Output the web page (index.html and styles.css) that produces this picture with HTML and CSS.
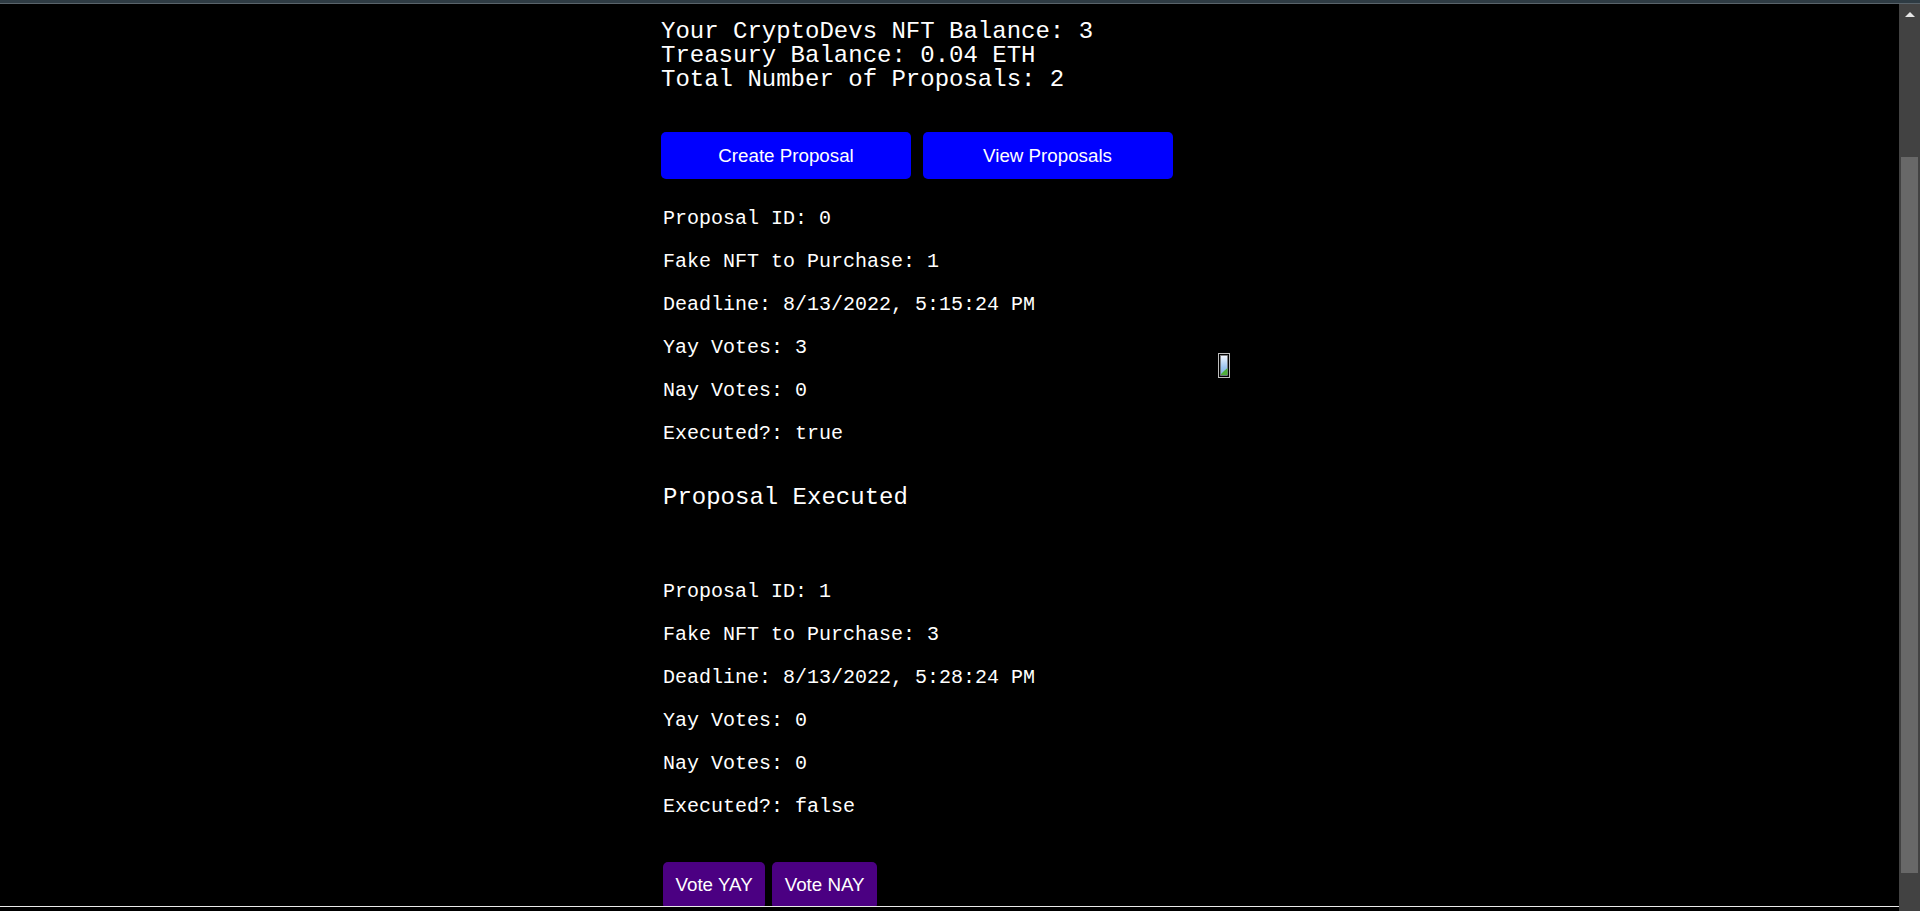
FILE: index.html
```html
<!DOCTYPE html>
<html>
<head>
<meta charset="utf-8">
<title>Crypto Devs DAO</title>
<link rel="stylesheet" href="styles.css">
</head>
<body>
<div class="topbar"></div>
<div class="window">
  <div class="page">
    <div class="main">
      <div class="content">
        <div class="description">Your CryptoDevs NFT Balance: 3<br>Treasury Balance: 0.04 ETH<br>Total Number of Proposals: 2</div>
        <div class="actions">
          <button class="button">Create Proposal</button>
          <button class="button">View Proposals</button>
        </div>
        <div class="card">
          <p>Proposal ID: 0</p>
          <p>Fake NFT to Purchase: 1</p>
          <p>Deadline: 8/13/2022, 5:15:24 PM</p>
          <p>Yay Votes: 3</p>
          <p>Nay Votes: 0</p>
          <p>Executed?: true</p>
          <div class="executed">Proposal Executed</div>
        </div>
        <div class="card">
          <p>Proposal ID: 1</p>
          <p>Fake NFT to Purchase: 3</p>
          <p>Deadline: 8/13/2022, 5:28:24 PM</p>
          <p>Yay Votes: 0</p>
          <p>Nay Votes: 0</p>
          <p>Executed?: false</p>
          <div class="vote-row">
            <button class="button2">Vote YAY</button>
            <button class="button2">Vote NAY</button>
          </div>
        </div>
      </div>
      <div class="art">
        <svg class="broken" width="12" height="25" viewBox="0 0 12 25">
          <defs>
            <linearGradient id="sky" x1="0" y1="0" x2="0" y2="1">
              <stop offset="0" stop-color="#f4f8ff"/>
              <stop offset="0.6" stop-color="#9cc4ee"/>
              <stop offset="1" stop-color="#7fb0e0"/>
            </linearGradient>
          </defs>
          <rect x="0.5" y="0.5" width="11" height="24" fill="#000" stroke="#bdbdbd"/>
          <rect x="2.5" y="2.5" width="7" height="20" fill="url(#sky)" stroke="#8a8a8a" stroke-width="0.6"/>
          <polygon points="3,22 9.5,22 9.5,15 6,18 3,21" fill="#4fae3a"/>
        </svg>
      </div>
    </div>
    <div class="footer"></div>
  </div>
  <div class="scrollbar">
    <div class="arrow-box"><div class="arrow"></div></div>
    <div class="thumb"></div>
  </div>
</div>
</body>
</html>
```

FILE: styles.css
```css
html, body {
  margin: 0;
  padding: 0;
}

body {
  background: #000;
  height: 911px;
  overflow: hidden;
  font-family: "Liberation Mono", "Courier New", monospace;
  color: #fff;
}

.topbar {
  height: 3px;
  background: #2e3b43;
  border-bottom: 1px solid #59636a;
}

.window {
  display: flex;
  height: 907px;
}

.page {
  flex: 1;
  display: flex;
  flex-direction: column;
  background: #000;
}

.main {
  flex: 1;
  display: flex;
  overflow: hidden;
  padding-left: 661px;
  padding-top: 16px;
}

.content {
  width: 545px;
}

.description {
  font-size: 24px;
  line-height: 24px;
  margin: 0;
  color: #fff;
}

.actions {
  display: flex;
  gap: 11.5px;
  margin-top: 40px;
}

.button {
  width: 250px;
  padding: 12.5px;
  background: #0000ff;
  color: #fff;
  border: none;
  border-radius: 5px;
  font-family: "Liberation Sans", Arial, sans-serif;
  font-size: 18.75px;
  line-height: normal;
}

.card {
  width: fit-content;
  margin-top: 6px;
  border: 2px solid #000;
}

.card p {
  margin: 20px 0;
  font-size: 20px;
  line-height: normal;
  color: #fff;
}

.executed {
  margin-top: 41px;
  margin-bottom: 40px;
  font-size: 24px;
  line-height: 24px;
}

.vote-row {
  display: flex;
  gap: 7px;
  padding-top: 23.5px;
}

.button2 {
  padding: 12.5px;
  background: #4b0082;
  color: #fff;
  border: none;
  border-radius: 5px;
  font-family: "Liberation Sans", Arial, sans-serif;
  font-size: 18.75px;
  line-height: normal;
}

.art {
  padding-left: 12px;
  padding-top: 333px;
}

.broken {
  display: block;
}

.footer {
  height: 4px;
  border-top: 1px solid #eaeaea;
  background: #000;
}

.scrollbar {
  width: 21px;
  background: #424242;
  display: flex;
  flex-direction: column;
}

.arrow-box {
  height: 21px;
  display: flex;
  align-items: center;
  justify-content: center;
}

.arrow {
  width: 0;
  height: 0;
  border-left: 5px solid transparent;
  border-right: 5px solid transparent;
  border-bottom: 5px solid #e6e6e6;
}

.thumb {
  margin: 132px 2px 0 2px;
  height: 716px;
  background: #686868;
}
```
